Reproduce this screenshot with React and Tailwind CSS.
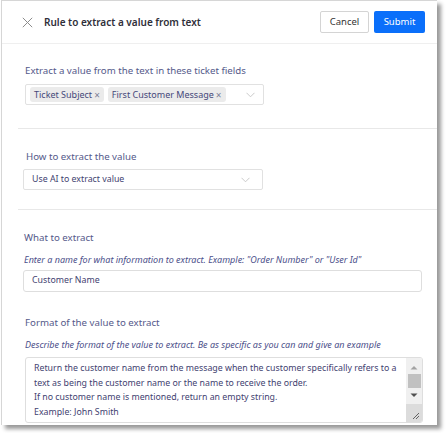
import React from "react";

const F = { fontFamily: '"Noto Sans", "Open Sans", sans-serif' };

function Chevron({ className = "" }) {
  return (
    <svg className={className} width="9" height="6" viewBox="0 0 9 6" fill="none">
      <path d="M0.5 0.8 L4.5 4.8 L8.5 0.8" stroke="#c4c4c4" strokeWidth="0.9" />
    </svg>
  );
}

function Tag({ children }) {
  return (
    <span className="flex items-center h-[15px] px-[4px] rounded-[3px] bg-[#ebebeb] text-[9px] text-[#45487a] gap-[2px] leading-none">
      {children}
      <span className="text-[10px] text-[#7d7f98]">×</span>
    </span>
  );
}

export default function App() {
  return (
    <div className="w-[447px] h-[433px] bg-white overflow-hidden" style={F}>
      <div className="ml-[1px] w-[436px] h-[425px] bg-white border-l border-t border-[#d6d6d6] shadow-[4px_4px_4px_rgba(0,0,0,0.4)] overflow-hidden flex flex-col">
        {/* header */}
        <div className="h-[43px] shrink-0 border-b border-[#efefef] flex items-center pl-[20px] pr-[12px]">
          <svg width="11" height="11" viewBox="0 0 11 11" className="shrink-0">
            <path d="M0.8 0.8 L10.2 10.2 M10.2 0.8 L0.8 10.2" stroke="#8c8c8c" strokeWidth="1" />
          </svg>
          <div className="ml-[11px] text-[10px] font-semibold text-[#2f2f3a] flex-1">
            Rule to extract a value from text
          </div>
          <button className="h-[22px] w-[49px] border border-[#d4d4d4] rounded-[2px] bg-white text-[9.5px] text-[#333]">
            Cancel
          </button>
          <button className="ml-[5px] h-[22px] w-[51px] rounded-[2px] bg-[#0a6ffa] text-[9.5px] text-white">
            Submit
          </button>
        </div>

        {/* section 1 */}
        <div className="pl-[23px] pt-[20px] pb-[23px]">
          <div className="text-[9.7px] text-[#55598a] leading-[14px]">
            Extract a value from the text in these ticket fields
          </div>
          <div className="mt-[6px] w-[239px] h-[21px] border border-[#e1e1e1] rounded-[2px] flex items-center pl-[4px] pr-[8px] gap-[4px]">
            <Tag>Ticket Subject</Tag>
            <Tag>First Customer Message</Tag>
            <Chevron className="ml-auto" />
          </div>
        </div>

        <div className="ml-[16px] border-t border-[#e8e8e8]" />

        {/* section 2 */}
        <div className="pl-[21px] pt-[21px] pb-[19px]">
          <div className="pl-[3px] text-[9.7px] text-[#55598a] leading-[14px]">How to extract the value</div>
          <div className="mt-[5px] w-[240px] h-[21px] border border-[#e1e1e1] rounded-[2px] flex items-center pl-[8px] pr-[12px]">
            <span className="text-[8.8px] text-[#3f4270]">Use AI to extract value</span>
            <Chevron className="ml-auto" />
          </div>
        </div>

        <div className="ml-[16px] border-t border-[#e8e8e8]" />

        {/* section 3 + 4 */}
        <div className="pl-[21px] pr-[16px] pt-[21px]">
          <div className="pl-[1px] text-[9.7px] text-[#55598a] leading-[14px]">What to extract</div>
          <div className="mt-[9px] pl-[1px] text-[9px] italic text-[#4b4f8a] leading-[12px]">
            Enter a name for what information to extract. Example: "Order Number" or "User Id"
          </div>
          <div className="mt-[4px] w-[399px] h-[22px] border border-[#dedede] rounded-[3px] flex items-center pl-[8px]">
            <span className="text-[8.8px] text-[#3f4270]">Customer Name</span>
          </div>

          <div className="mt-[24px] pl-[2px] text-[9.7px] text-[#55598a] leading-[14px]">Format of the value to extract</div>
          <div className="mt-[9px] pl-[2px] text-[9px] italic text-[#4b4f8a] leading-[12px]">
            Describe the format of the value to extract. Be as specific as you can and give an example
          </div>
          <div className="mt-[6px] ml-[2px] w-[398px] h-[66px] border border-[#dedede] rounded-[3px] flex overflow-hidden">
            <div className="flex-1 pl-[8px] pt-[3px] text-[8.8px] text-[#3f4270] leading-[14.7px] whitespace-nowrap">
              Return the customer name from the message when the customer specifically refers to a
              <br />
              text as being the customer name or the name to receive the order.
              <br />
              If no customer name is mentioned, return an empty string.
              <br />
              Example: John Smith
            </div>
            <div className="w-[16px] shrink-0 bg-[#f0f0f0] flex flex-col items-center">
              <svg width="8" height="5" viewBox="0 0 8 5" className="mt-[7px]">
                <path d="M0.5 4.5 L4 1 L7.5 4.5 Z" fill="#a3a3a3" />
              </svg>
              <div className="mt-[4px] w-[13px] h-[14px] bg-[#c1c1c1]" />
              <svg width="8" height="5" viewBox="0 0 8 5" className="mt-[5px]">
                <path d="M0.5 0.5 L4 4 L7.5 0.5 Z" fill="#505050" />
              </svg>
              <div className="mt-auto w-full h-[18px] bg-[#dcdcdc] flex items-end justify-end pr-[2px] pb-[2px]">
                <svg width="9" height="9" viewBox="0 0 9 9">
                  <path d="M8 2 L2 8 M8 5 L5 8" stroke="#555" strokeWidth="0.9" />
                </svg>
              </div>
            </div>
          </div>
        </div>
      </div>
    </div>
  );
}
